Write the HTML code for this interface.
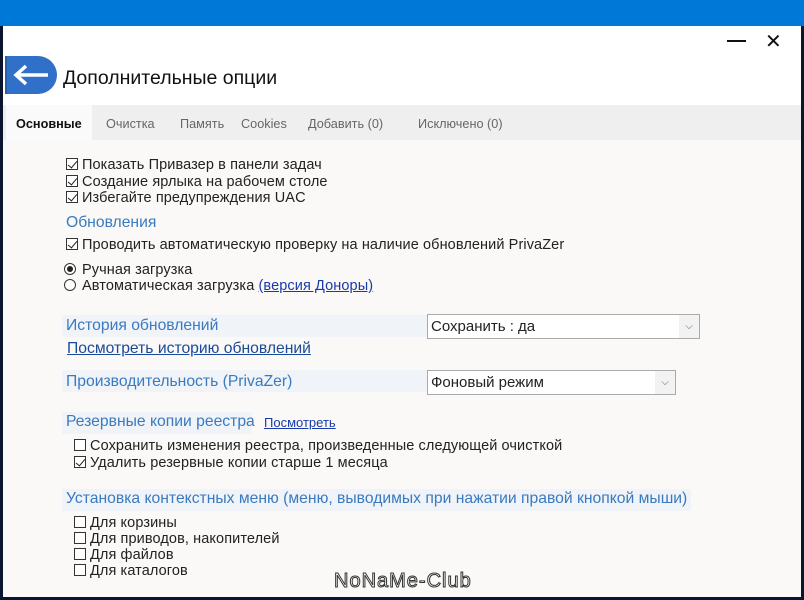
<!DOCTYPE html>
<html><head><meta charset="utf-8"><style>
*{margin:0;padding:0;box-sizing:border-box}
body{width:804px;height:600px;overflow:hidden;background:#0a1530;font-family:"Liberation Sans","DejaVu Sans",sans-serif;position:relative}
#top{position:absolute;left:0;top:0;width:804px;height:26px;background:#0078d7}
#win{position:absolute;left:3px;top:26px;width:798px;height:571px;background:#faf9f7}
#hdr{position:absolute;left:0;top:0;width:798px;height:79px;background:#fff}
.a{position:absolute;white-space:nowrap}
.t{font-size:14.5px;color:#222;line-height:16px;letter-spacing:0.1px}
.h{font-size:15.7px;color:#3a7ac0;line-height:20px}
.band{position:absolute;background:#f0f3f7}
.cb{position:absolute;width:12px;height:12px;border:1px solid #333;background:#fff}
.cb.c::after{content:"";position:absolute;left:3px;top:0px;width:4px;height:8px;border:solid #222;border-width:0 1.5px 1.5px 0;transform:rotate(40deg)}
.rb{position:absolute;width:12px;height:12px;border:1px solid #333;border-radius:50%;background:#fff}
.rb.c::after{content:"";position:absolute;left:2px;top:2px;width:6px;height:6px;border-radius:50%;background:#222}
.lnk{color:#1a3aa8;text-decoration:underline}
.sel{position:absolute;height:25px;border:1px solid #aaa;background:#fff;font-size:15px;color:#222;line-height:23px;padding-left:3px}
.sel .ar{position:absolute;right:0;top:0;width:20px;height:23px;background:#f2f2f2;color:#666;font-size:10px;text-align:center}
.tab{position:absolute;top:12px;font-size:12.7px;color:#666}
</style></head><body>
<div id="top"></div>
<div id="win">
<div id="hdr">
 <div class="a" style="left:724px;top:14px;width:19px;height:2px;background:#111"></div>
 <div class="a" style="left:762px;top:3px;font-size:20px;color:#111">✕</div>
 <div class="a" style="left:2px;top:30px;width:52px;height:38px;background:#3070c8;border-radius:0 19px 19px 0;border-left:2px solid #2a5ea8"></div>
 <svg class="a" style="left:8px;top:38px" width="40" height="22"><path d="M37 11H6M15 2L5 11L15 20" stroke="#fff" stroke-width="3.5" fill="none"/></svg>
 <div class="a" style="left:60px;top:41px;font-size:19.5px;color:#111">Дополнительные опции</div>
</div>
<div class="a" style="left:0;top:79px;width:798px;height:35px;background:#efefef">
 <div class="a" style="left:3px;top:0;width:86px;height:35px;background:#fafafa"></div>
 <div class="tab" style="left:13px;color:#111;font-weight:bold">Основные</div>
 <div class="tab" style="left:103px">Очистка</div>
 <div class="tab" style="left:177px">Память</div>
 <div class="tab" style="left:238px">Cookies</div>
 <div class="tab" style="left:305px">Добавить (0)</div>
 <div class="tab" style="left:415px">Исключено (0)</div>
</div>
</div>
<div class="cb c" style="left:66px;top:158px"></div><div class="a t" style="left:82px;top:157px">Показать Привазер в панели задач</div>
<div class="cb c" style="left:66px;top:175px"></div><div class="a t" style="left:82px;top:174px">Создание ярлыка на рабочем столе</div>
<div class="cb c" style="left:66px;top:191px"></div><div class="a t" style="left:82px;top:190px">Избегайте предупреждения UAC</div>
<div class="a h" style="left:66px;top:213px">Обновления</div>
<div class="cb c" style="left:66px;top:238px"></div><div class="a t" style="left:82px;top:237px">Проводить автоматическую проверку на наличие обновлений PrivaZer</div>
<div class="rb c" style="left:64px;top:263px"></div><div class="a t" style="left:82px;top:262px">Ручная загрузка</div>
<div class="rb" style="left:64px;top:279px"></div><div class="a t" style="left:82px;top:278px">Автоматическая загрузка <span class="lnk">(версия Доноры)</span></div>
<div class="band" style="left:62px;top:315px;width:366px;height:22px"></div>
<div class="a h" style="left:66px;top:316px">История обновлений</div>
<div class="sel" style="left:427px;top:314px;width:273px">Сохранить : да<div class="ar">⌵</div></div>
<div class="a h lnk" style="left:67px;top:339px;color:#1a4a9a">Посмотреть историю обновлений</div>
<div class="band" style="left:62px;top:370px;width:366px;height:22px"></div>
<div class="a h" style="left:66px;top:372px">Производительность (PrivaZer)</div>
<div class="sel" style="left:427px;top:370px;width:249px">Фоновый режим<div class="ar">⌵</div></div>
<div class="band" style="left:62px;top:412px;width:190px;height:22px"></div>
<div class="a h" style="left:66px;top:412px">Резервные копии реестра</div>
<div class="a lnk" style="left:264px;top:415px;font-size:13px;color:#1a3aa8">Посмотреть</div>
<div class="cb" style="left:74px;top:439px"></div><div class="a t" style="left:90px;top:438px">Сохранить изменения реестра, произведенные следующей очисткой</div>
<div class="cb c" style="left:74px;top:456px"></div><div class="a t" style="left:90px;top:455px">Удалить резервные копии старше 1 месяца</div>
<div class="band" style="left:62px;top:489px;width:629px;height:22px"></div>
<div class="a h" style="left:66px;top:489px">Установка контекстных меню (меню, выводимых при нажатии правой кнопкой мыши)</div>
<div class="cb" style="left:74px;top:516px"></div><div class="a t" style="left:90px;top:515px">Для корзины</div>
<div class="cb" style="left:74px;top:532px"></div><div class="a t" style="left:90px;top:531px">Для приводов, накопителей</div>
<div class="cb" style="left:74px;top:548px"></div><div class="a t" style="left:90px;top:547px">Для файлов</div>
<div class="cb" style="left:74px;top:564px"></div><div class="a t" style="left:90px;top:563px">Для каталогов</div>
<div class="a" style="left:334px;top:570px;font-size:20px;color:#fff;-webkit-text-stroke:1px #333;letter-spacing:1px">NoNaMe-Club</div>
</body></html>
